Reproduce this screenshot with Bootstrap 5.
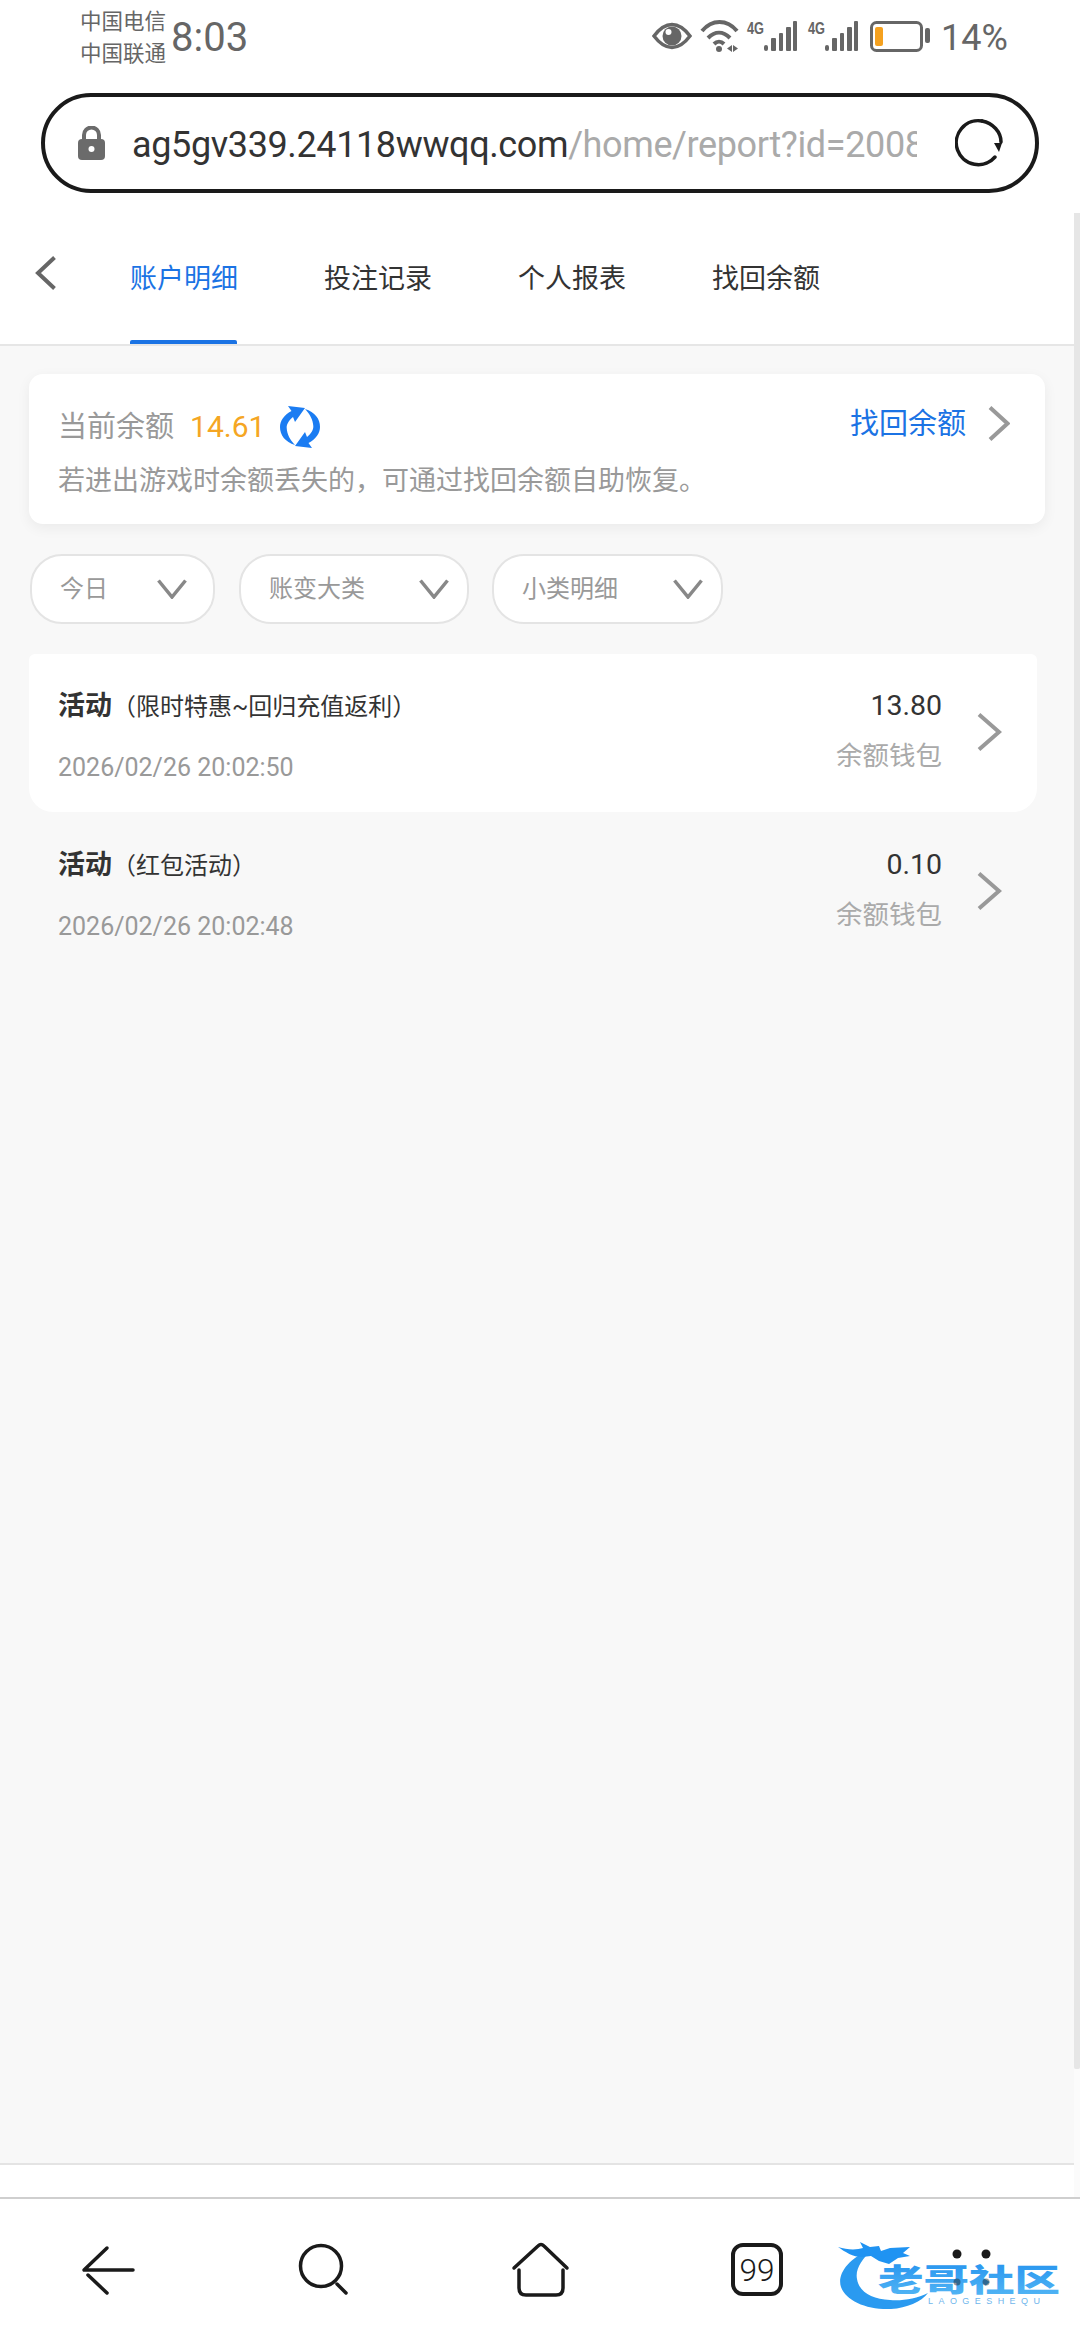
<!DOCTYPE html>
<html lang="zh-CN">
<head>
    <meta charset="utf-8">
    <meta name="viewport" content="width=device-width, initial-scale=1.0">
    <link href="https://cdn.jsdelivr.net/npm/bootstrap@5.3.1/dist/css/bootstrap.min.css" rel="stylesheet">
    <title>账户明细</title>
    <style>
        html, body { height: 2340px; overflow: hidden; }
        body { width: 1080px; background: #fff; color: #333; font-family: "Roboto", "Noto Sans CJK SC", sans-serif; font-weight: 300; position: relative; }
        svg { display: block; flex: none; }

        .status-bar { height: 93px; padding: 6px 0 0 80px; color: #666; }
        .carrier { font-size: 21.5px; line-height: 32px; width: 91px; font-weight: 400; white-space: nowrap; }
        .clock { font-size: 40px; font-weight: 400; line-height: 1; margin-top: 12px; }
        .status-icons { position: absolute; top: 19px; left: 652px; }
        .battery-pct { font-size: 36px; font-weight: 400; line-height: 1; position: absolute; left: 941px; top: 20px; color: #666; }

        .url-wrap { height: 100px; margin: 0 41px 0 41px; border: 4px solid #1a1a1a; border-radius: 50px; padding: 0 32px 0 33px; }
        .url-text { width: 785px; margin-left: 27px; margin-right: 38px; font-size: 36px; font-weight: 400; white-space: nowrap; overflow: hidden; color: #aaa; line-height: 48px; letter-spacing: -.38px; margin-top: 3px; }
        .url-text b { font-weight: 400; color: #333; }

        .tab-bar { height: 153px; border-bottom: 2px solid #e6e6e6; padding-left: 35px; }
        .tab-back { margin-right: 74px; margin-top: 9px; }
        .tab-link { height: 151px; width: 107px; margin-right: 87px; padding: 0; font-size: 27px; font-weight: 400; color: #333; white-space: nowrap; line-height: 173px; position: relative; }
        .tab-link:hover { color: #333; }
        .tab-link.active { color: #1b73e4; }
        .tab-link.active::after { content: ""; position: absolute; left: 0; right: 0; bottom: 0; height: 4px; background: #1b73e4; border-radius: 2px 2px 0 0; }

        .main-area { flex: 1; background: #f8f8f8; padding: 28px 0 0 29px; border-bottom: 2px solid #e4e4e4; }
        .balance-card { width: 1016px; height: 150px; border: 0; border-radius: 14px; box-shadow: 0 4px 14px rgba(0,0,0,.06); padding: 30px 35px 0 29px; }
        .balance-label { font-size: 29px; color: #999; font-weight: 400; line-height: 36px; }
        .balance-num { font-size: 30px; color: #f5a623; font-weight: 400; margin: 0 13px 0 16px; line-height: 36px; }
        .recover-link { font-size: 29px; color: #1b73e4; font-weight: 400; line-height: 36px; margin-right: 22px; margin-top: -6px; }
        .balance-tip { font-size: 27px; color: #999; font-weight: 400; line-height: 36px; margin-top: 13px; white-space: nowrap; }

        .filter-row { margin: 30px 0 30px 1px; gap: 24px; }
        .filter-btn { height: 70px; background: #fff; border: 2px solid #e4e4e4; border-radius: 32px; padding: 0 18px 0 28px; font-size: 24px; font-weight: 400; color: #999; line-height: 1; }
        .filter-btn:hover { background: #fff; color: #999; border-color: #e4e4e4; }
        .filter-one { width: 185px; padding-right: 26px; }
        .filter-two { width: 230px; }
        .filter-three { width: 231px; margin-left: -1px; }

        .record-row { width: 1008px; height: 158px; border: 0; border-radius: 24px; background: transparent; padding: 0 35px 0 29px; margin-bottom: 1px; }
        .record-row.on { background: #fff; }
        .record-title { font-size: 24px; font-weight: 400; color: #333; line-height: 36px; margin-top: 34px; white-space: nowrap; }
        .record-title b { font-size: 27px; font-weight: 700; }
        .record-date { font-size: 25px; color: #999; font-weight: 400; line-height: 32px; margin-top: 27px; }
        .record-amt { font-size: 28.5px; color: #333; font-weight: 400; line-height: 36px; margin-top: 34px; text-align: right; }
        .record-wallet { font-size: 26.5px; color: #aaa; font-weight: 400; line-height: 36px; margin-top: 14px; text-align: right; }
        .record-more { margin-left: 35px; margin-top: 59px; }

        .gap-strip { height: 32px; background: #fff; }
        .bottom-bar { height: 143px; border-top: 2px solid #cfcfcf; background: #fff; position: relative; }
        .bottom-icons { position: absolute; left: 0; top: 0; }
        .tab-count { font-family: "Roboto", sans-serif; font-size: 32px; font-weight: 300; fill: #1a1a1a; }
        .logo-mark { position: absolute; left: 835px; top: 38px; }

        .page-scroll { position: absolute; top: 213px; height: 1856px; right: 0; width: 6px; background: #e6e6e6; border-radius: 0 0 2px 2px; }
        .scroll-track { position: absolute; top: 2069px; height: 128px; right: 0; width: 6px; background: #fbfbfb; }
    </style>
</head>
<body class="d-flex flex-column">

    <div class="status-bar d-flex">
        <div class="carrier">中国电信<br>中国联通</div>
        <div class="clock">8:03</div>
    </div>
    <svg class="status-icons" width="290" height="40" viewBox="0 0 290 40" fill="#666">
        <!-- eye -->
        <path d="M2 17C8 9 15 5.500 20 5.500S32 9 38 17c-6 8-13 11.500-18 11.500S8 25 2 17z" fill="none" stroke="#666" stroke-width="3.500"/>
        <circle cx="20" cy="17" r="9.500"/>
        <circle cx="16.500" cy="13" r="3" fill="#fff"/>
        <!-- wifi -->
        <g fill="none" stroke="#666" stroke-width="4">
            <path d="M50 12C60 0 75 0 85 12"/>
            <path d="M56 19C63 12 71 12 78 19"/>
            <path d="M62 25c3-3 7-3 10 0"/>
        </g>
        <circle cx="67" cy="30" r="3"/>
        <path d="M75 29.500l5-3.500v7zM81 26l5 3.500-5 3.500z"/>
        <!-- sim 1 -->
        <text x="95" y="15" font-family="Liberation Sans, sans-serif" font-size="16" font-weight="700" textLength="17" lengthAdjust="spacingAndGlyphs">4G</text>
        <rect x="112" y="26" width="4" height="6" rx="2"/><rect x="119" y="19" width="5" height="13" rx="1"/><rect x="127" y="14" width="4" height="18" rx="1"/><rect x="134" y="8" width="5" height="24" rx="1"/><rect x="141" y="2" width="4" height="30" rx="1"/>
        <!-- sim 2 -->
        <text x="156" y="15" font-family="Liberation Sans, sans-serif" font-size="16" font-weight="700" textLength="17" lengthAdjust="spacingAndGlyphs">4G</text>
        <rect x="173" y="26" width="4" height="6" rx="2"/><rect x="180" y="19" width="5" height="13" rx="1"/><rect x="188" y="14" width="4" height="18" rx="1"/><rect x="195" y="8" width="5" height="24" rx="1"/><rect x="202" y="2" width="4" height="30" rx="1"/>
        <!-- battery -->
        <rect x="219.500" y="3.500" width="50" height="28" rx="5" fill="none" stroke="#666" stroke-width="3"/>
        <rect x="223" y="8" width="8" height="19" rx="2" fill="#f5a11f"/>
        <rect x="273" y="9" width="5" height="15" rx="2"/>
    </svg>
    <div class="battery-pct">14%</div>

    <div class="url-wrap d-flex align-items-center">
        <svg width="27" height="34" viewBox="0 0 27 34" fill="#6b6b6b">
            <path d="M6 14V9a7.500 7.500 0 0 1 15 0v5" fill="none" stroke="#6b6b6b" stroke-width="4"/>
            <rect y="13" width="27" height="21" rx="4"/>
            <circle cx="13.500" cy="23" r="3" fill="#fff"/>
        </svg>
        <div class="url-text"><b>ag5gv339.24118wwqq.com</b>/home/report?id=2008</div>
        <svg width="48" height="50" viewBox="0 0 48 50" fill="none">
            <path d="M27 3A22 22 0 1 0 40 39" stroke="#1a1a1a" stroke-width="3.500" stroke-linecap="round"/>
            <path d="M27 3C38 5 46 14 46 24" stroke="#1a1a1a" stroke-width="3.500" stroke-linecap="round"/>
            <path d="M39 25l8 0-3 9z" fill="#1a1a1a"/>
        </svg>
    </div>

    <nav class="tab-bar nav flex-nowrap align-items-center">
        <a href="#" class="tab-back">
            <svg width="21" height="34" viewBox="0 0 21 34" fill="none"><path d="M19.500 1.500L3 17l16.500 15.500" stroke="#666" stroke-width="4"/></svg>
        </a>
        <a href="#" class="nav-link tab-link active">账户明细</a>
        <a href="#" class="nav-link tab-link">投注记录</a>
        <a href="#" class="nav-link tab-link">个人报表</a>
        <a href="#" class="nav-link tab-link">找回余额</a>
    </nav>

    <main class="main-area">
        <section class="card balance-card">
            <div class="d-flex align-items-center">
                <span class="balance-label">当前余额</span>
                <span class="balance-num">14.61</span>
                <svg width="44" height="46" viewBox="0 0 44 46" fill="#1b7cf2">
                    <path d="M10 2L27 4 17 18 15 13C10 17 8.500 21 8.700 24 9 30 12 36 17 41 7 38 2 31 2 23 2 17 6 11 13.500 7z"/>
                    <path d="M34 44L17 42 27 28 29 33C34 29 35.500 25 35.300 22 35 16 32 10 27 5 37 8 42 15 42 23 42 29 38 35 30.500 39z"/>
                </svg>
                <span class="recover-link ms-auto">找回余额</span>
                <svg class="mb-2" width="22" height="35" viewBox="0 0 22 35" fill="none"><path d="M2 1.500L19.500 17.500 2 33.500" stroke="#999" stroke-width="4"/></svg>
            </div>
            <div class="balance-tip">若进出游戏时余额丢失的，可通过找回余额自助恢复。</div>
        </section>

        <div class="filter-row d-flex">
            <button class="btn filter-btn filter-one d-flex align-items-center justify-content-between">今日
                <svg width="30" height="20" viewBox="0 0 30 20" fill="none"><path d="M1.500 1.500L15 18 28.500 1.500" stroke="#888" stroke-width="3.500"/></svg>
            </button>
            <button class="btn filter-btn filter-two d-flex align-items-center justify-content-between">账变大类
                <svg width="30" height="20" viewBox="0 0 30 20" fill="none"><path d="M1.500 1.500L15 18 28.500 1.500" stroke="#888" stroke-width="3.500"/></svg>
            </button>
            <button class="btn filter-btn filter-three d-flex align-items-center justify-content-between">小类明细
                <svg width="30" height="20" viewBox="0 0 30 20" fill="none"><path d="M1.500 1.500L15 18 28.500 1.500" stroke="#888" stroke-width="3.500"/></svg>
            </button>
        </div>

        <div class="list-group">
            <div class="list-group-item record-row on d-flex justify-content-between">
                <div>
                    <div class="record-title"><b>活动</b>（限时特惠~回归充值返利）</div>
                    <div class="record-date">2026/02/26 20:02:50</div>
                </div>
                <div class="d-flex align-items-start">
                    <div>
                        <div class="record-amt">13.80</div>
                        <div class="record-wallet">余额钱包</div>
                    </div>
                    <svg class="record-more" width="25" height="38" viewBox="0 0 25 38" fill="none"><path d="M2 1.500L22 19 2 36.500" stroke="#999" stroke-width="4"/></svg>
                </div>
            </div>
            <div class="list-group-item record-row d-flex justify-content-between">
                <div>
                    <div class="record-title"><b>活动</b>（红包活动）</div>
                    <div class="record-date">2026/02/26 20:02:48</div>
                </div>
                <div class="d-flex align-items-start">
                    <div>
                        <div class="record-amt">0.10</div>
                        <div class="record-wallet">余额钱包</div>
                    </div>
                    <svg class="record-more" width="25" height="38" viewBox="0 0 25 38" fill="none"><path d="M2 1.500L22 19 2 36.500" stroke="#999" stroke-width="4"/></svg>
                </div>
            </div>
        </div>
    </main>

    <div class="gap-strip"></div>

    <footer class="bottom-bar">
        <svg class="bottom-icons" width="800" height="141" viewBox="0 0 800 141" fill="none" stroke="#1a1a1a" stroke-width="3.500" stroke-linecap="round" stroke-linejoin="round">
            <!-- back -->
            <path d="M107 49L84 71H133"/>
            <path d="M88 76L107 94"/>
            <!-- search -->
            <circle cx="321" cy="67" r="20.500"/>
            <path d="M337 85L346 94"/>
            <!-- home -->
            <path d="M514 69L538 47q3-3 6 0L567 69"/>
            <path d="M519 71V89q0 7 7 7H556q7 0 7-7V71"/>
            <!-- tab count -->
            <rect x="733" y="46" width="48" height="49" rx="10" stroke-width="4"/>
            <text class="tab-count" x="757" y="82" text-anchor="middle" stroke="none" textLength="35" lengthAdjust="spacingAndGlyphs">99</text>
        </svg>
        <svg class="logo-mark" width="240" height="80" viewBox="0 0 240 80">
            <defs>
                <linearGradient id="logoFill" x1="0" y1="0" x2="0" y2="1">
                    <stop offset="0" stop-color="#1f8fee"/>
                    <stop offset="1" stop-color="#56b8f5"/>
                </linearGradient>
            </defs>
            <!-- dragon body -->
            <path d="M36 12C12 22 2 38 6 50c5 14 26 23 50 22 16-1 30-7 37-16-12 6-26 8-38 7-18-1-31-8-33-21-2-10 5-20 15-29z" fill="#2a9af0"/>
            <!-- dragon head -->
            <path d="M3 10c9 3 19 3 25 1l-3-6 10 5 9-1 2 5 9-3 20-1-7 6 7 3-12 2-9 6-10-3-8-5-9 1C18 20 10 15 3 10z" fill="#1f93f2"/>
            <text x="43" y="54" font-family="Noto Sans CJK SC, sans-serif" font-size="31" font-weight="900" fill="url(#logoFill)" textLength="182" lengthAdjust="spacingAndGlyphs">老哥社区</text>
            <text x="93" y="67" font-family="Liberation Sans, sans-serif" font-size="9" fill="#6fb6ec" textLength="112" lengthAdjust="spacing">LAOGESHEQU</text>
            <circle cx="122" cy="17" r="4.500" fill="#1a1a1a"/>
            <circle cx="151" cy="17" r="4.500" fill="#1a1a1a"/>
            <circle cx="122" cy="45" r="3.500" fill="#1a1a1a" opacity=".45"/>
            <circle cx="151" cy="45" r="3.500" fill="#1a1a1a" opacity=".45"/>
        </svg>
    </footer>

    <div class="page-scroll"></div>
    <div class="scroll-track"></div>
</body>
</html>
